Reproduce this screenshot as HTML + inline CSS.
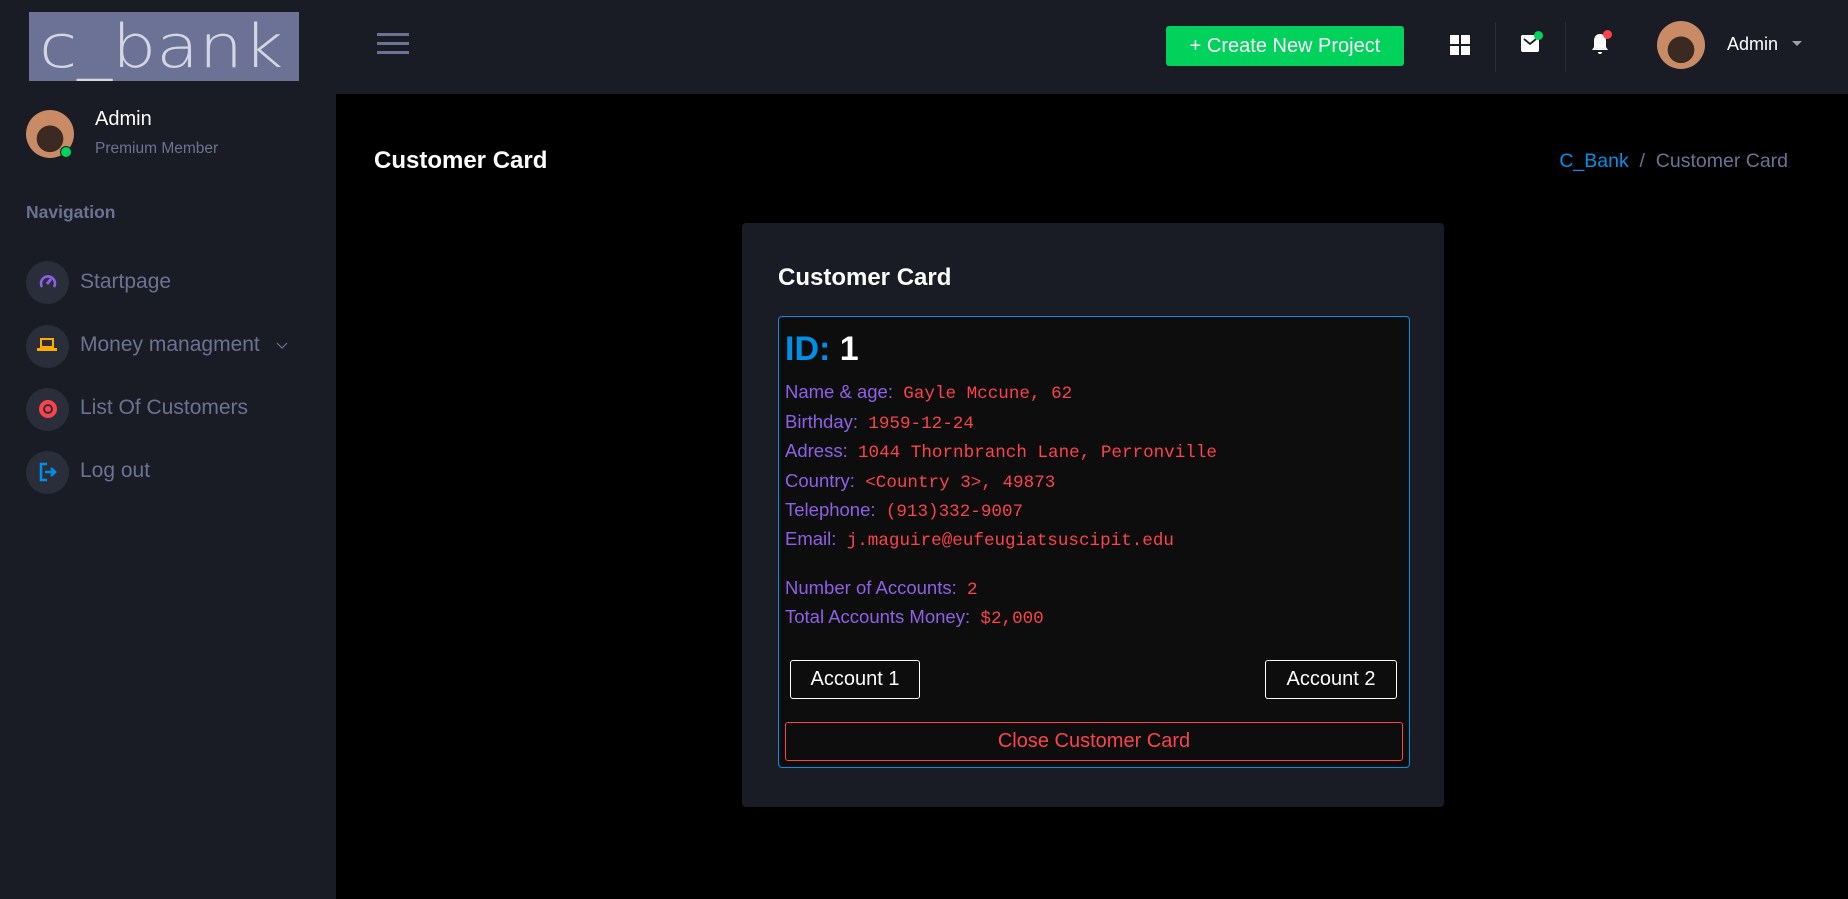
<!DOCTYPE html>
<html><head><meta charset="utf-8"><style>
*{margin:0;padding:0;box-sizing:border-box}
body{width:1848px;height:899px;overflow:hidden;background:#000;font-family:"Liberation Sans",sans-serif;position:relative}
.abs{position:absolute;white-space:nowrap}
.hdr{left:0;top:0;width:1848px;height:94px;background:#191c24}
.side{left:0;top:94px;width:336px;height:805px;background:#191c24}
.logo{left:29px;top:12px;width:270px;height:69px;background:#6c7196;color:#d4d6e2;font-size:60px;line-height:70px;padding-left:10px;font-family:"DejaVu Sans",sans-serif;font-weight:200;overflow:hidden}
.muted{color:#6c7293}
.ic{width:43px;height:43px;border-radius:50%;background:#2a2d3a;left:26px}
.nav{left:80px;font-size:21px;color:#6c7293}
.lab{color:#8f5fe8}
.val{color:#fc424a;font-family:"Liberation Mono",monospace;font-size:17.6px}
.row{left:785px;font-size:18.5px}
.av{border-radius:50%;background:radial-gradient(circle at 50% 60%,#3a2a22 0 35%,#c98a66 36% 100%)}
</style></head><body>
<div class="abs hdr"></div>
<div class="abs side"></div>
<div class="abs logo"><span style="display:inline-block;transform:scaleX(1.16);transform-origin:left">c_bank</span></div>
<div class="abs" style="left:377px;top:33px;width:32px;height:3px;background:#6c7293;box-shadow:0 9px 0 #6c7293,0 18px 0 #6c7293"></div>
<div class="abs" style="left:1166px;top:26px;width:238px;height:40px;background:#00d25b;border-radius:3px;color:#fff;font-size:20px;line-height:40px;text-align:center">+ Create New Project</div>
<div class="abs" style="left:1450px;top:35px;width:20px;height:20px;display:grid;grid-template-columns:9px 9px;gap:2px"><i style="background:#fff"></i><i style="background:#fff"></i><i style="background:#fff"></i><i style="background:#fff"></i></div>
<div class="abs" style="left:1495px;top:22px;width:1px;height:50px;background:#2c2e33"></div>
<div class="abs" style="left:1521px;top:35px;width:18px;height:17px;background:#fff;border-radius:2px"></div>
<svg class="abs" style="left:1521px;top:35px" width="18" height="17"><path d="M3 4l6 5 6-5" fill="none" stroke="#191c24" stroke-width="1.8"/></svg>
<div class="abs" style="left:1534px;top:31px;width:9px;height:9px;background:#00d25b;border-radius:50%"></div>
<div class="abs" style="left:1565px;top:22px;width:1px;height:50px;background:#2c2e33"></div>
<svg class="abs" style="left:1590px;top:32px" width="20" height="24" viewBox="0 0 20 24"><path d="M10 2c-4 0-6 3-6 7v6l-2 3h16l-2-3V9c0-4-2-7-6-7z M8 20h4a2 2 0 0 1-4 0z" fill="#fff"/></svg>
<div class="abs" style="left:1603px;top:30px;width:9px;height:9px;background:#fc424a;border-radius:50%"></div>
<div class="abs av" style="left:1657px;top:21px;width:48px;height:48px"></div>
<div class="abs" style="left:1727px;top:34px;color:#fff;font-size:18px">Admin</div>
<div class="abs" style="left:1792px;top:41px;width:0;height:0;border-left:5px solid transparent;border-right:5px solid transparent;border-top:5px solid #9aa0ac"></div>

<div class="abs av" style="left:26px;top:110px;width:48px;height:48px"></div>
<div class="abs" style="left:60px;top:146px;width:12px;height:12px;background:#00d25b;border-radius:50%;border:1px solid #191c24"></div>
<div class="abs" style="left:95px;top:108px;color:#fff;font-size:20px">Admin</div>
<div class="abs muted" style="left:95px;top:140px;font-size:15.5px">Premium Member</div>
<div class="abs muted" style="left:26px;top:202px;font-size:17.5px;font-weight:bold">Navigation</div>

<div class="abs ic" style="top:261px"></div>
<svg class="abs" style="left:38px;top:272px" width="20" height="20" viewBox="0 0 20 20"><path d="M4 15A7 7 0 1 1 16 15" fill="none" stroke="#8f5fe8" stroke-width="2.5"/><path d="M9 12l4-5" stroke="#8f5fe8" stroke-width="3"/></svg>
<div class="abs nav" style="top:270px">Startpage</div>
<div class="abs ic" style="top:325px"></div>
<div class="abs" style="left:40px;top:338px;width:14px;height:10px;border:2px solid #ffab00"></div>
<div class="abs" style="left:37px;top:348px;width:20px;height:3px;background:#ffab00"></div>
<div class="abs nav" style="top:333px">Money managment</div>
<svg class="abs" style="left:276px;top:342px" width="12" height="8"><path d="M1 1l5 5 5-5" fill="none" stroke="#6c7293" stroke-width="1.2"/></svg>
<div class="abs ic" style="top:388px"></div>
<div class="abs" style="left:39px;top:400px;width:18px;height:18px;background:#fc424a;border-radius:50%;border:4px solid #fc424a;box-shadow:inset 0 0 0 2px #2a2d3a"></div>
<div class="abs nav" style="top:396px">List Of Customers</div>
<div class="abs ic" style="top:451px"></div>
<svg class="abs" style="left:38px;top:461px" width="20" height="22" viewBox="0 0 20 22"><path d="M9 3H3v16h6" fill="none" stroke="#0090e7" stroke-width="2.5"/><path d="M7 11h10M13 7l4 4-4 4" fill="none" stroke="#0090e7" stroke-width="2.5"/></svg>
<div class="abs nav" style="top:459px">Log out</div>

<div class="abs" style="left:374px;top:147px;color:#fff;font-size:24px;font-weight:bold">Customer Card</div>
<div class="abs" style="right:60px;top:150px;font-size:19.5px;color:#6c7293"><span style="color:#0090e7">C_Bank</span>&nbsp;&nbsp;/&nbsp;&nbsp;Customer Card</div>

<div class="abs" style="left:742px;top:223px;width:702px;height:584px;background:#191c24;border-radius:4px"></div>
<div class="abs" style="left:778px;top:264px;color:#fff;font-size:24px;font-weight:bold">Customer Card</div>
<div class="abs" style="left:778px;top:316px;width:632px;height:452px;background:#0d0d0d;border:1px solid #0090e7;border-radius:4px"></div>
<div class="abs" style="left:785px;top:330px;font-size:34px;font-weight:bold"><span style="color:#0090e7">ID:</span> <span style="color:#fff">1</span></div>
<div class="abs row" style="top:381px"><span class="lab">Name &amp; age:</span>&nbsp; <span class="val">Gayle Mccune, 62</span></div>
<div class="abs row" style="top:411px"><span class="lab">Birthday:</span>&nbsp; <span class="val">1959-12-24</span></div>
<div class="abs row" style="top:440px"><span class="lab">Adress:</span>&nbsp; <span class="val">1044 Thornbranch Lane, Perronville</span></div>
<div class="abs row" style="top:470px"><span class="lab">Country:</span>&nbsp; <span class="val">&lt;Country 3&gt;, 49873</span></div>
<div class="abs row" style="top:499px"><span class="lab">Telephone:</span>&nbsp; <span class="val">(913)332-9007</span></div>
<div class="abs row" style="top:528px"><span class="lab">Email:</span>&nbsp; <span class="val">j.maguire@eufeugiatsuscipit.edu</span></div>
<div class="abs row" style="top:577px"><span class="lab">Number of Accounts:</span>&nbsp; <span class="val">2</span></div>
<div class="abs row" style="top:606px"><span class="lab">Total Accounts Money:</span>&nbsp; <span class="val">$2,000</span></div>
<div class="abs" style="left:790px;top:660px;width:130px;height:39px;border:1px solid #fff;border-radius:3px;color:#fff;font-size:20px;line-height:37px;text-align:center">Account 1</div>
<div class="abs" style="left:1265px;top:660px;width:132px;height:39px;border:1px solid #fff;border-radius:3px;color:#fff;font-size:20px;line-height:37px;text-align:center">Account 2</div>
<div class="abs" style="left:785px;top:722px;width:618px;height:39px;border:1px solid #fc424a;border-radius:3px;color:#fc424a;font-size:20px;line-height:37px;text-align:center">Close Customer Card</div>
</body></html>
